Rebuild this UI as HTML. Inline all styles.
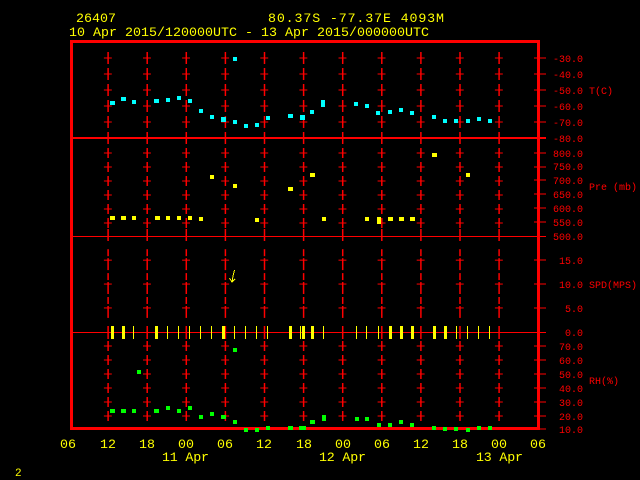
<!DOCTYPE html>
<html><head><meta charset="utf-8"><style>
html,body{margin:0;padding:0;background:#000;width:640px;height:480px;overflow:hidden}
svg{display:block}
text{font-family:"Liberation Mono",monospace}
</style></head><body>
<svg width="640" height="480" viewBox="0 0 640 480" xmlns="http://www.w3.org/2000/svg" shape-rendering="crispEdges">
<defs>
<pattern id="pT" patternUnits="userSpaceOnUse" x="88.55" y="50" width="39.1" height="16">
<path d="M19.5 2V14M15.5 8H23.5" stroke="#f00" stroke-width="1.2" fill="none"/></pattern>
<pattern id="pP" patternUnits="userSpaceOnUse" x="88.55" y="146" width="39.1" height="14">
<path d="M19.5 2V12M15.5 7H23.5" stroke="#f00" stroke-width="1.2" fill="none"/></pattern>
<pattern id="pS" patternUnits="userSpaceOnUse" x="88.55" y="248.2" width="39.1" height="23.9">
<path d="M19.5 1V8M19.5 10V22M15.5 12H23.5" stroke="#f00" stroke-width="1.2" fill="none"/></pattern>
<pattern id="pR" patternUnits="userSpaceOnUse" x="88.55" y="339" width="39.1" height="14">
<path d="M19.5 2V12M15.5 7H23.5" stroke="#f00" stroke-width="1.2" fill="none"/></pattern>
<pattern id="pV" patternUnits="userSpaceOnUse" x="88.55" y="0" width="39.1" height="480">
<path d="M19.5 0V480" stroke="#f00" stroke-width="1.2"/></pattern>
</defs>
<!-- header -->
<g fill="#ff0" font-size="13.3">
<text x="76" y="22" textLength="40">26407</text>
<text x="268" y="22" textLength="176">80.37S  -77.37E  4093M</text>
<text x="69" y="36" textLength="360">10 Apr 2015/120000UTC - 13 Apr 2015/000000UTC</text>
</g>
<!-- crosses -->
<rect x="88" y="50" width="431" height="80" fill="url(#pT)"/>
<rect x="88" y="146" width="431" height="84" fill="url(#pP)"/>
<rect x="88" y="248" width="431" height="72" fill="url(#pS)"/>
<rect x="88" y="339" width="431" height="84" fill="url(#pR)"/>
<rect x="88" y="132" width="431" height="12" fill="url(#pV)"/>
<rect x="88" y="229" width="431" height="12" fill="url(#pV)"/>
<rect x="88" y="326" width="431" height="13" fill="url(#pV)"/>
<!-- frame -->
<g fill="#f00">
<rect x="70" y="40" width="470" height="3"/>
<rect x="70" y="40" width="3" height="390"/>
<rect x="537" y="40" width="3" height="390"/>
<rect x="70" y="427" width="470" height="3"/>
<rect x="72" y="137" width="474" height="2"/>
<rect x="72" y="236" width="474" height="1"/>
<rect x="72" y="332" width="474" height="1"/>
</g>
<path stroke="#f00" stroke-width="1.2" d="M534 58H546M534 74H546M534 90H546M534 106H546M534 122H546M534 153H546M534 167H546M534 180H546M534 194H546M534 208H546M534 222H546M534 260H546M534 284H546M534 308H546M534 346H546M534 360H546M534 374H546M534 388H546M534 402H546M534 416H546M534 429H546"/>
<!-- right labels -->
<g fill="#f00" font-size="10" text-anchor="end">
<text x="583" y="62">-30.0</text><text x="583" y="78">-40.0</text><text x="583" y="94">-50.0</text><text x="583" y="110">-60.0</text><text x="583" y="126">-70.0</text><text x="583" y="142">-80.0</text>
<text x="583" y="157">800.0</text><text x="583" y="170">750.0</text><text x="583" y="184">700.0</text><text x="583" y="198">650.0</text><text x="583" y="212">600.0</text><text x="583" y="226">550.0</text><text x="583" y="240">500.0</text>
<text x="583" y="264">15.0</text><text x="583" y="288">10.0</text><text x="583" y="312">5.0</text><text x="583" y="336">0.0</text>
<text x="583" y="350">70.0</text><text x="583" y="364">60.0</text><text x="583" y="378">50.0</text><text x="583" y="392">40.0</text><text x="583" y="406">30.0</text><text x="583" y="420">20.0</text><text x="583" y="433">10.0</text>
</g>
<g fill="#f00" font-size="10">
<text x="589" y="94">T(C)</text><text x="589" y="190">Pre (mb)</text><text x="589" y="288">SPD(MPS)</text><text x="589" y="384">RH(%)</text>
</g>
<!-- wind bars -->
<g stroke="#ff0" stroke-width="1">
<path d="M133.5 326V339M167.5 326V339M178.5 326V339M189.5 326V339M200.5 326V339M211.5 326V339M234.5 326V339M245.5 326V339M256.5 326V339M267.5 326V339M300.5 326V339M323.5 326V339M356.5 326V339M366.5 326V339M378.5 326V339M456.5 326V339M467.5 326V339M478.5 326V339M489.5 326V339"/>
</g>
<g fill="#ff0">
<rect x="111" y="326" width="3" height="13"/><rect x="122" y="326" width="3" height="13"/><rect x="155" y="326" width="3" height="13"/><rect x="222" y="326" width="3" height="13"/><rect x="289" y="326" width="3" height="13"/><rect x="302" y="326" width="3" height="13"/><rect x="311" y="326" width="3" height="13"/><rect x="389" y="326" width="3" height="13"/><rect x="400" y="326" width="3" height="13"/><rect x="411" y="326" width="3" height="13"/><rect x="433" y="326" width="3" height="13"/><rect x="444" y="326" width="3" height="13"/>
</g>
<path d="M234.5 270L233 276L232 282M229.5 278L232 282L235 279" stroke="#ff0" stroke-width="1" fill="none"/>
<!-- temperature -->
<g fill="#0ff">
<rect x="110" y="101" width="5" height="4"/><rect x="121" y="97" width="5" height="4"/><rect x="132" y="100" width="4" height="4"/><rect x="154" y="99" width="5" height="4"/><rect x="166" y="98" width="4" height="4"/><rect x="177" y="96" width="4" height="4"/><rect x="188" y="99" width="4" height="4"/><rect x="199" y="109" width="4" height="4"/><rect x="210" y="115" width="4" height="4"/><rect x="221" y="117" width="5" height="5"/><rect x="233" y="120" width="4" height="4"/><rect x="244" y="124" width="4" height="4"/><rect x="255" y="123" width="4" height="4"/><rect x="266" y="116" width="4" height="4"/><rect x="288" y="114" width="5" height="4"/><rect x="300" y="115" width="5" height="5"/><rect x="310" y="110" width="4" height="4"/><rect x="233" y="57" width="4" height="4"/><rect x="321" y="100" width="4" height="7"/><rect x="354" y="102" width="4" height="4"/><rect x="365" y="104" width="4" height="4"/><rect x="376" y="111" width="4" height="4"/><rect x="388" y="110" width="4" height="4"/><rect x="399" y="108" width="4" height="4"/><rect x="410" y="111" width="4" height="4"/><rect x="432" y="115" width="4" height="4"/><rect x="443" y="119" width="4" height="4"/><rect x="454" y="119" width="4" height="4"/><rect x="466" y="119" width="4" height="4"/><rect x="477" y="117" width="4" height="4"/><rect x="488" y="119" width="4" height="4"/>
</g>
<!-- pressure -->
<g fill="#ff0">
<rect x="110" y="216" width="5" height="4"/><rect x="121" y="216" width="5" height="4"/><rect x="132" y="216" width="4" height="4"/><rect x="155" y="216" width="5" height="4"/><rect x="166" y="216" width="4" height="4"/><rect x="177" y="216" width="4" height="4"/><rect x="188" y="216" width="4" height="4"/><rect x="199" y="217" width="4" height="4"/><rect x="210" y="175" width="4" height="4"/><rect x="233" y="184" width="4" height="4"/><rect x="255" y="218" width="4" height="4"/><rect x="288" y="187" width="5" height="4"/><rect x="310" y="173" width="5" height="4"/><rect x="322" y="217" width="4" height="4"/><rect x="365" y="217" width="4" height="4"/><rect x="377" y="217" width="4" height="7"/><rect x="388" y="217" width="5" height="4"/><rect x="399" y="217" width="5" height="4"/><rect x="410" y="217" width="5" height="4"/><rect x="432" y="153" width="5" height="4"/><rect x="466" y="173" width="4" height="4"/>
</g>
<!-- RH -->
<g fill="#0f0">
<rect x="110" y="409" width="5" height="4"/><rect x="121" y="409" width="5" height="4"/><rect x="132" y="409" width="4" height="4"/><rect x="137" y="370" width="4" height="4"/><rect x="154" y="409" width="5" height="4"/><rect x="166" y="406" width="4" height="4"/><rect x="177" y="409" width="4" height="4"/><rect x="188" y="406" width="4" height="4"/><rect x="199" y="415" width="4" height="4"/><rect x="210" y="412" width="4" height="4"/><rect x="221" y="415" width="5" height="4"/><rect x="233" y="348" width="4" height="4"/><rect x="233" y="420" width="4" height="4"/><rect x="244" y="428" width="4" height="4"/><rect x="255" y="428" width="4" height="4"/><rect x="266" y="426" width="4" height="4"/><rect x="288" y="426" width="5" height="4"/><rect x="299" y="426" width="7" height="4"/><rect x="310" y="420" width="5" height="4"/><rect x="322" y="415" width="4" height="6"/><rect x="355" y="417" width="4" height="4"/><rect x="365" y="417" width="4" height="4"/><rect x="377" y="423" width="4" height="4"/><rect x="388" y="423" width="4" height="4"/><rect x="399" y="420" width="4" height="4"/><rect x="410" y="423" width="4" height="4"/><rect x="432" y="426" width="4" height="4"/><rect x="443" y="427" width="4" height="4"/><rect x="454" y="427" width="4" height="4"/><rect x="466" y="428" width="4" height="4"/><rect x="477" y="426" width="4" height="4"/><rect x="488" y="426" width="4" height="4"/>
</g>
<!-- x labels -->
<g fill="#ff0" font-size="13.3" text-anchor="middle">
<text x="68" y="448">06</text><text x="108" y="448">12</text><text x="147" y="448">18</text><text x="186" y="448">00</text><text x="225" y="448">06</text><text x="264" y="448">12</text><text x="304" y="448">18</text><text x="343" y="448">00</text><text x="382" y="448">06</text><text x="421" y="448">12</text><text x="460" y="448">18</text><text x="499" y="448">00</text><text x="538" y="448">06</text>
</g>
<g fill="#ff0" font-size="13.3">
<text x="162" y="461" textLength="47">11 Apr</text><text x="319" y="461" textLength="47">12 Apr</text><text x="476" y="461" textLength="47">13 Apr</text>
</g>
<text x="15" y="476" fill="#ff0" font-size="11">2</text>
</svg>
</body></html>
